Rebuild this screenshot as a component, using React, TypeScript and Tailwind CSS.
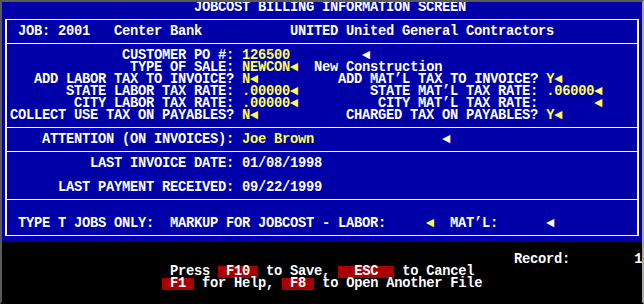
import React from "react";

type Seg = [number, string, ("w" | "y" | "k")?];

function renderText(t: string) {
  const parts = t.split("◄");
  const out: React.ReactNode[] = [];
  parts.forEach((p, i) => {
    if (p) out.push(<React.Fragment key={"p" + i}>{p}</React.Fragment>);
    if (i < parts.length - 1)
      out.push(
        <span key={"m" + i} className="inline-block w-[8px] h-[12px] align-top text-center tracking-normal">
          ◄
        </span>
      );
  });
  return out;
}

function Line({ segs = [], start = 0 }: { segs?: Seg[]; start?: number }) {
  const out: React.ReactNode[] = [];
  let col = start;
  segs.forEach(([c, t, k], i) => {
    if (c > col) out.push(<span key={"s" + i}>{" ".repeat(c - col)}</span>);
    const cls =
      k === "y"
        ? "text-[#ffff55]"
        : k === "k"
        ? "inline-block h-[12px] align-top bg-[#a80000] text-white"
        : "text-white";
    out.push(
      <span key={"t" + i} className={cls}>
        {renderText(t)}
      </span>
    );
    col = c + t.length;
  });
  return <div className="h-[12px] leading-[12px] whitespace-pre">{out}</div>;
}

function Section({ children, last = false }: { children: React.ReactNode; last?: boolean }) {
  return (
    <div className={"pt-[6px] pb-[5px] pl-[3px] " + (last ? "" : "border-b border-white")}>{children}</div>
  );
}

export default function App() {
  return (
    <div className="w-[644px] h-[304px] border-2 border-t-[#5a5a5a] border-l-[#5a5a5a] border-r-[#a8a8a8] border-b-black bg-black font-['Liberation_Mono','DejaVu_Sans_Mono',monospace] font-bold text-[13.75px] tracking-[-0.25px] leading-[12px] text-white overflow-hidden">
      <div className="h-[240px] bg-[#0000a8] flex flex-col">
        <Line segs={[[24, "JOBCOST BILLING INFORMATION SCREEN"]]} />
        <div className="mx-[3px] mt-[5px] border-t border-b border-x-2 border-white">
          <Section>
            <Line
              start={1}
              segs={[
                [2, "JOB: 2001"],
                [14, "Center Bank"],
                [36, "UNITED United General Contractors"],
              ]}
            />
          </Section>
          <Section>
            <Line start={1} segs={[[15, "CUSTOMER PO #:"], [30, "126500", "y"], [45, "◄"]]} />
            <Line start={1} segs={[[16, "TYPE OF SALE:"], [30, "NEWCON◄", "y"], [39, "New Construction"]]} />
            <Line
              start={1}
              segs={[
                [4, "ADD LABOR TAX TO INVOICE?"],
                [30, "N◄", "y"],
                [42, "ADD MAT’L TAX TO INVOICE?"],
                [68, "Y◄", "y"],
              ]}
            />
            <Line
              start={1}
              segs={[
                [8, "STATE LABOR TAX RATE:"],
                [30, ".00000◄", "y"],
                [46, "STATE MAT’L TAX RATE:"],
                [68, ".06000◄", "y"],
              ]}
            />
            <Line
              start={1}
              segs={[
                [9, "CITY LABOR TAX RATE:"],
                [30, ".00000◄", "y"],
                [47, "CITY MAT’L TAX RATE:"],
                [74, "◄", "y"],
              ]}
            />
            <Line
              start={1}
              segs={[
                [1, "COLLECT USE TAX ON PAYABLES?"],
                [30, "N◄", "y"],
                [43, "CHARGED TAX ON PAYABLES?"],
                [68, "Y◄", "y"],
              ]}
            />
          </Section>
          <Section>
            <Line start={1} segs={[[5, "ATTENTION (ON INVOICES):"], [30, "Joe Brown", "y"], [55, "◄"]]} />
          </Section>
          <Section>
            <Line start={1} segs={[[11, "LAST INVOICE DATE:"], [30, "01/08/1998"]]} />
            <Line />
            <Line start={1} segs={[[7, "LAST PAYMENT RECEIVED:"], [30, "09/22/1999"]]} />
          </Section>
          <Section last>
            <Line />
            <Line
              start={1}
              segs={[
                [2, "TYPE T JOBS ONLY:  MARKUP FOR JOBCOST - LABOR:"],
                [53, "◄", "y"],
                [56, "MAT’L:"],
                [68, "◄"],
              ]}
            />
          </Section>
        </div>
      </div>
      <div className="h-[60px] flex flex-col">
        <Line />
        <Line segs={[[64, "Record:"], [79, "1"]]} />
        <Line
          segs={[
            [21, "Press"],
            [27, " F10 ", "k"],
            [33, "to Save,"],
            [42, "  ESC  ", "k"],
            [50, "to Cancel"],
          ]}
        />
        <Line
          segs={[
            [20, " F1 ", "k"],
            [25, "for Help,"],
            [35, " F8 ", "k"],
            [40, "to Open Another File"],
          ]}
        />
        <Line />
      </div>
    </div>
  );
}
